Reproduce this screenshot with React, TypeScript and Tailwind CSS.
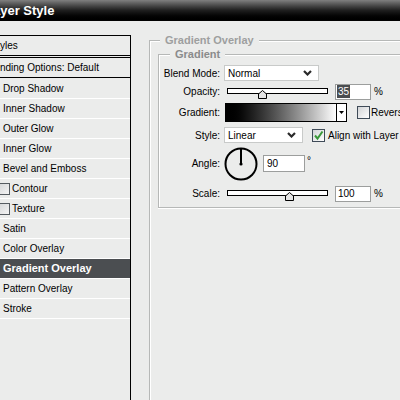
import React from "react";

// etched group line: grey rule with a white highlight one pixel in
const groupLabel = "px-[5px] font-bold text-[11px] leading-[12px]";

function Chevron() {
  return (
    <svg width="9" height="6" viewBox="0 0 9 6">
      <path d="M1 1 L4.5 4.5 L8 1" fill="none" stroke="#2a2a2a" strokeWidth="2.2" />
    </svg>
  );
}

function Check({ checked }: { checked?: boolean }) {
  return (
    <div className="flex h-[13px] w-[13px] shrink-0 items-center justify-center border border-[#3f4b58] bg-linear-to-br from-[#d2d4d6] to-white">
      {checked && (
        <svg width="11" height="11" viewBox="0 0 11 11">
          <path d="M2 5.5 L4.5 8.5 L9.5 1.5" fill="none" stroke="#3a983a" strokeWidth="2" />
        </svg>
      )}
    </div>
  );
}

function Slider({ pos }: { pos: number }) {
  return (
    <div className="relative ml-[3px] h-[13px] w-[101px]">
      <div className="mt-[3px] h-[6px] w-full border border-black bg-white" />
      <svg className="absolute top-[5px]" style={{ left: pos - 4 }} width="9" height="9" viewBox="0 0 9 9">
        <path d="M0.5 8.5 V4 L4.5 0.5 L8.5 4 V8.5 Z" fill="#e4e4e4" stroke="#000" />
      </svg>
    </div>
  );
}

function Row({ label, h, children }: { label: string; h: string; children: React.ReactNode }) {
  return (
    <div className={`flex items-center ${h}`}>
      <div className="w-[61px] shrink-0 text-right">{label}</div>
      <div className="ml-[4px] flex items-center">{children}</div>
    </div>
  );
}

const effects = [
  { name: "Drop Shadow" },
  { name: "Inner Shadow" },
  { name: "Outer Glow" },
  { name: "Inner Glow" },
  { name: "Bevel and Emboss" },
  { name: "Contour", sub: true },
  { name: "Texture", sub: true },
  { name: "Satin" },
  { name: "Color Overlay" },
  { name: "Gradient Overlay", active: true },
  { name: "Pattern Overlay" },
  { name: "Stroke" },
];

export default function App() {
  return (
    <div className="flex h-[400px] w-[400px] flex-col overflow-hidden bg-[#ebeceb] font-['Liberation_Sans',Arial,sans-serif] text-[10px] text-black">
      <div className="flex h-[21px] shrink-0 items-center bg-linear-to-b from-[#808080] via-[#1e1e1e] to-black">
        <span className="ml-[-15px] whitespace-nowrap text-[13px] font-bold text-white">Layer Style</span>
      </div>

      <div className="flex min-h-0 flex-1">
        {/* style list */}
        <div className="flex w-[131px] shrink-0 flex-col pt-[14px]">
          <div className="flex flex-1 flex-col border-r border-black">
            <div className="flex h-[21px] items-center border-y border-black">
              <span className="ml-[-9.5px] whitespace-nowrap">Styles</span>
            </div>
            <div className="h-[1px]" />
            <div className="flex h-[21px] items-center border-y border-black">
              <span className="ml-[-14.5px] whitespace-nowrap">Blending Options: Default</span>
            </div>
            {effects.map((fx, i) => (
              <div
                key={fx.name}
                className={`flex items-center border-b border-white ${i === 0 ? "h-[21px]" : "h-[20px]"} ${
                  fx.active ? "bg-[#4b4e51] font-bold text-[11px] text-white" : ""
                }`}
              >
                {fx.sub ? (
                  <div className="ml-[-2px] flex items-center gap-[2px]">
                    <div className="h-[12px] w-[12px] border border-[#555b60] bg-linear-to-br from-[#d6d8d9] to-[#f4f4f4]" />
                    <span>{fx.name}</span>
                  </div>
                ) : (
                  <span className="pl-[3px] whitespace-nowrap">{fx.name}</span>
                )}
              </div>
            ))}
          </div>
        </div>

        {/* settings */}
        <div className="flex min-w-0 flex-1 flex-col pl-[18px] pt-[13px]">
          <div className="flex w-[300px] flex-1 flex-col">
            <div className="flex h-[12px] text-[#9e9f9f]">
              <div className="h-[6px] w-[11px] self-end border-l border-t border-[#b6b8b7] shadow-[inset_1px_1px_0_#fff]" />
              <span className={groupLabel}>Gradient Overlay</span>
              <div className="h-[6px] flex-1 self-end border-t border-[#b6b8b7] shadow-[inset_0_1px_0_#fff]" />
            </div>
            <div className="flex-1 border-l border-[#b6b8b7] pl-[8px] pt-[2px] shadow-[inset_1px_0_0_#fff]">
              <div className="flex h-[12px] text-[#8a8b8b]">
                <div className="h-[6px] w-[12px] self-end border-l border-t border-[#b6b8b7] shadow-[inset_1px_1px_0_#fff]" />
                <span className={groupLabel}>Gradient</span>
                <div className="h-[6px] flex-1 self-end border-t border-[#b6b8b7] shadow-[inset_0_1px_0_#fff]" />
              </div>
              <div className="border-b border-l border-[#b6b8b7] pt-[4px] shadow-[inset_1px_0_0_#fff,0_1px_0_#fff]">
                <Row label="Blend Mode:" h="h-[18px]">
                  <div className="flex h-[16px] w-[95px] items-center justify-between border border-[#c8cac9] bg-white pl-[3px] pr-[6px]">
                    <span>Normal</span>
                    <Chevron />
                  </div>
                </Row>
                <Row label="Opacity:" h="h-[19px]">
                  <Slider pos={35} />
                  <div className="ml-[7px] flex h-[16px] w-[36px] items-center border border-[#9c9e9d] bg-white pl-[1px]">
                    <span className="bg-[#4a4d50] px-[1px] leading-[13px] text-white">35</span>
                  </div>
                  <span className="ml-[3px]">%</span>
                </Row>
                <Row label="Gradient:" h="h-[22px]">
                  <div className="ml-[1px] flex h-[19px] w-[122px] border border-black bg-white">
                    <div className="flex-1 bg-linear-to-r from-black to-white" />
                    <div className="flex w-[10px] items-center justify-center border-l border-black">
                      <svg width="5" height="3" viewBox="0 0 5 3">
                        <path d="M0 0 H5 L2.5 3 Z" fill="#000" />
                      </svg>
                    </div>
                  </div>
                  <div className="ml-[10px]">
                    <Check />
                  </div>
                  <span className="ml-[1px] whitespace-nowrap">Reverse</span>
                </Row>
                <Row label="Style:" h="h-[24px]">
                  <div className="flex h-[16px] w-[79px] items-center justify-between border border-[#c8cac9] bg-white pl-[3px] pr-[6px]">
                    <span>Linear</span>
                    <Chevron />
                  </div>
                  <div className="ml-[9px]">
                    <Check checked />
                  </div>
                  <span className="ml-[3px] whitespace-nowrap">Align with Layer</span>
                </Row>
                <Row label="Angle:" h="h-[33px]">
                  <svg width="34" height="34" viewBox="0 0 34 34">
                    <circle cx="17" cy="17" r="15.5" fill="none" stroke="#000" strokeWidth="2" />
                    <path d="M17 17 V2" stroke="#000" strokeWidth="2" />
                    <circle cx="17" cy="17" r="1.6" fill="#000" />
                  </svg>
                  <div className="ml-[5px] flex h-[17px] w-[42px] items-center border border-[#9c9e9d] bg-white pl-[3px]">
                    90
                  </div>
                  <span className="mb-[7px] ml-[2px]">°</span>
                </Row>
                <Row label="Scale:" h="h-[27px]">
                  <Slider pos={62} />
                  <div className="ml-[7px] flex h-[16px] w-[36px] items-center border border-[#9c9e9d] bg-white pl-[2px]">
                    100
                  </div>
                  <span className="ml-[3px]">%</span>
                </Row>
              </div>
            </div>
          </div>
        </div>
      </div>
    </div>
  );
}
